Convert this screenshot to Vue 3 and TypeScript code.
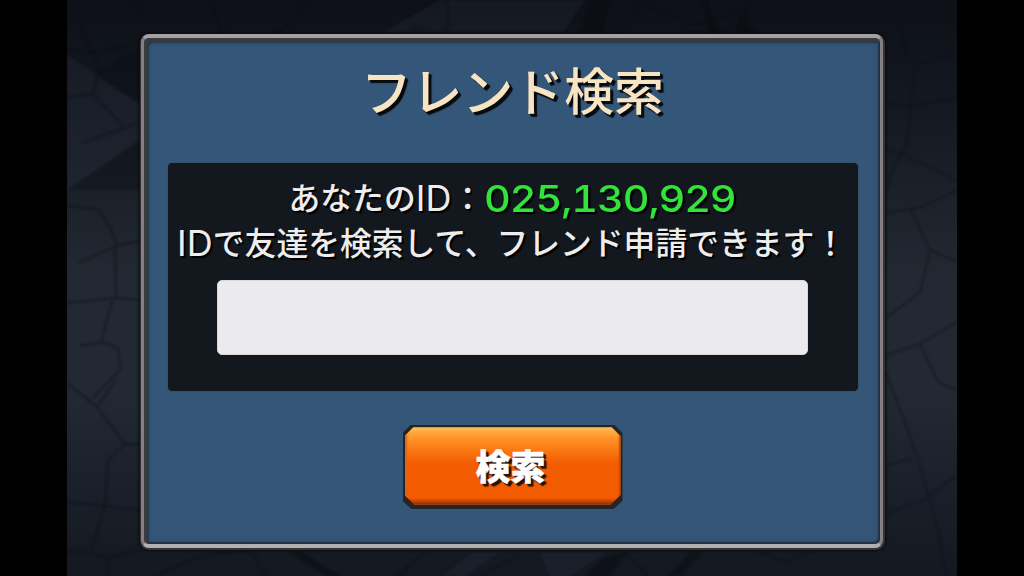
<script setup lang="ts">
import { ref } from 'vue'

const friendId = '025,130,929'
const query = ref('')

const cracks: string[] = [
  'M67 50L94 53Q101 65 93 94L67 97',
  'M93 94L125 128L142 121M125 128L84 142',
  'M94 53L142 43M148 22L135 0M84 20Q78 40 94 53',
  'M67 205L99 210Q113 229 117 246L142 240M117 246L78 263M115 248L116 298',
  'M67 303L115 298L142 300M112 301L101 342L80 346M101 342L118 348L121 369L93 398',
  'M67 383L97 407L125 444L142 445M97 407L116 380M125 444L108 460L105 506L142 511',
  'M67 502L105 506L91 550M67 552L91 552L108 558L142 550M108 558L108 576',
  'M900 25L907 58Q922 70 957 50M915 66L911 102L907 145L893 168',
  'M886 103L911 106L957 98M886 148L905 156L957 181M893 168L887 190',
  'M886 213L921 207L957 190M911 210L930 250L920 292L886 318M930 250L957 262',
  'M886 355L920 344L957 322M920 344L938 382L957 390',
  'M886 373L903 417L921 468L938 530L946 576M886 466L912 458M886 514L923 500L957 475',
  'M210 0L223 34M278 34L309 0M446 0Q453 20 443 34',
  'M616 34L642 3L692 25L748 9M704 0L713 34',
  'M158 576Q205 548 252 552L265 576M398 576L424 552M480 576L520 555',
  'M625 552L648 576M760 552L785 562L810 551',
]
</script>

<template>
  <main class="screen">
    <svg class="stone" viewBox="67 0 890 576" aria-hidden="true">
      <g class="facets">
        <path class="dark faint" d="M100 70L140 48V105L98 78ZM67 190L140 140V190Z" />
        <path class="dark" d="M590 0H609L602 34H580ZM705 0L722 34H710ZM735 34L741 12L755 34Z" />
        <path class="dark" d="M404 34L415 22L440 34Z" />
        <path class="light" d="M67 55L142 105V138L67 190Z" />
        <path class="light" d="M380 34L440 0H585L562 34ZM442 576L474 552H500L465 576ZM540 552H607L570 576H550Z" />
        <path class="dark" d="M288 552H302L340 576H326ZM586 576L602 558L627 552L610 576ZM668 576L690 552H702L682 576Z" />
      </g>
      <path v-for="d in cracks" :key="d" class="crack" :d="d" />
    </svg>

    <section class="dialog">
      <div class="surface">
        <h1 class="title"><span class="kana">フレンド</span><span>検索</span></h1>

        <div class="panel">
          <p class="line id-line">
            <span>あなたの</span><span class="latin">ID</span><span>：</span><span class="number"><span class="digits">{{ friendId }}</span></span>
          </p>
          <p class="line message">
            <span class="latin">ID</span><span>で友達を検索して、フレンド申請できます！</span>
          </p>
          <input v-model="query" class="field" type="text" aria-label="ID" />
        </div>

        <button class="search" type="button">
          <span class="face"><span class="label">検索</span></span>
        </button>
      </div>
    </section>
  </main>
</template>

<style>
body {
  margin: 0;
  background: #000;
}
</style>

<style scoped>
.screen {
  position: relative;
  box-sizing: border-box;
  width: 1024px;
  height: 576px;
  padding: 34px 0 0 140px;
  overflow: hidden;
  background: #000;
  font-family: "Liberation Sans", "Noto Sans CJK JP", sans-serif;
}

.stone {
  position: absolute;
  left: 67px;
  top: 0;
  width: 890px;
  height: 576px;
  background: linear-gradient(#0d1017 0, #12161e 80px, #1b2129 190px, #222932 280px, #222932 390px, #191f28 500px, #141820 576px);
}

.facets {
  filter: blur(1px);
}

.dark {
  fill: #080b10;
  opacity: 0.5;
}

.faint {
  opacity: 0.3;
}

.light {
  fill: #29303b;
  opacity: 0.3;
}

.crack {
  fill: none;
  stroke: #0b0f16;
  stroke-width: 2.4;
  opacity: 0.36;
  filter: blur(1px);
}

.dialog {
  position: relative;
  box-sizing: border-box;
  width: 745px;
  height: 516px;
  padding: 0 2px 2px 1px;
  border-radius: 9px;
  background: #343437;
  box-shadow: 0 0 3px 1px #090b0e;
}

.surface {
  box-sizing: border-box;
  display: flex;
  flex-direction: column;
  align-items: center;
  width: 742px;
  height: 514px;
  border: 3px solid #857f83;
  border-top: 4px solid #a5a1a3;
  border-bottom: 4px solid #b0b0ae;
  border-radius: 8px;
  background: #345678;
  box-shadow:
    inset 3px 3px 1px #3b3b3f,
    inset 5px 5px 2px #29384a,
    inset -2px -2px 1px #26313f,
    inset 0 0 8px #28496b;
}

.title {
  height: 60px;
  margin: 20px 0 0 5px;
  color: #f7e4c2;
  font-family: "Noto Sans CJK JP", sans-serif;
  font-size: 49.8px;
  font-weight: 500;
  line-height: 60px;
  white-space: nowrap;
  text-shadow: 2px 2px 1px #080a0d, 3px 3px 1px #080a0d;
}

.kana {
  display: inline-block;
  transform: scale(1.02, 1.03);
  transform-origin: right center;
}

.panel {
  box-sizing: border-box;
  display: flex;
  flex-direction: column;
  align-items: center;
  width: 692px;
  height: 230px;
  margin: 44px 0 0 1px;
  padding-top: 11px;
  border: 1px solid #395168;
  border-radius: 5px;
  background: #13171e;
}

.line {
  display: flex;
  justify-content: center;
  height: 45px;
  margin: 0;
  color: #ededed;
  font-family: "Noto Sans CJK JP", sans-serif;
  font-size: 31.8px;
  font-weight: 500;
  line-height: 45px;
  white-space: nowrap;
  text-shadow: 2px 2px 1px #000;
}

.line span {
  flex: none;
}

.latin {
  width: 36px;
  font-family: Inter, "Liberation Sans", sans-serif;
  font-size: 36px;
  font-weight: 400;
  line-height: 48px;
  text-align: center;
}

.number {
  width: 253px;
  color: #32e43a;
  font-family: Inter, "Liberation Sans", sans-serif;
  line-height: 49px;
}

.digits {
  display: inline-block;
  font-size: 37px;
  font-variant-numeric: tabular-nums;
  letter-spacing: -1px;
  transform: scaleX(1.12);
  transform-origin: left center;
}

.message {
  margin-left: -2px;
}

.field {
  box-sizing: border-box;
  width: 591px;
  height: 75px;
  margin: 16px 0 0;
  padding: 0 16px;
  border: 1px solid #d8d8da;
  border-radius: 5px;
  outline: none;
  background: #ebebed;
  color: #222;
  font-size: 32px;
}

.search {
  width: 220px;
  height: 84px;
  margin: 33px 0 0 1px;
  padding: 2px 2px 4px;
  border: 0;
  background: #272426;
  clip-path: polygon(8px 0, 212px 0, 100% 8px, 100% 76px, 211px 100%, 9px 100%, 0 76px, 0 8px);
}

.face {
  display: flex;
  align-items: center;
  justify-content: center;
  height: 78px;
  background: linear-gradient(#ffce70 0, #ffad40 4px, #ff9429 11px, #fb7913 23px, #f35c02 36px, #f35b00 71px, #b64208 75px, #5b2b17 100%);
  box-shadow: inset 2px 0 2px #d8661a, inset -2px 0 2px #b94b0c;
  clip-path: polygon(9px 0, 207px 0, 100% 9px, 100% 68px, 206px 100%, 10px 100%, 0 68px, 0 9px);
}

.label {
  margin: -3px 0 0 -4px;
  color: #fff;
  font-family: "Noto Sans CJK JP", sans-serif;
  font-size: 35px;
  font-weight: 900;
  line-height: 44px;
  -webkit-text-stroke: 0.5px #fff;
  text-shadow: 2px 2px 1px #28150c, 3px 3px 1px #28150c;
}
</style>
